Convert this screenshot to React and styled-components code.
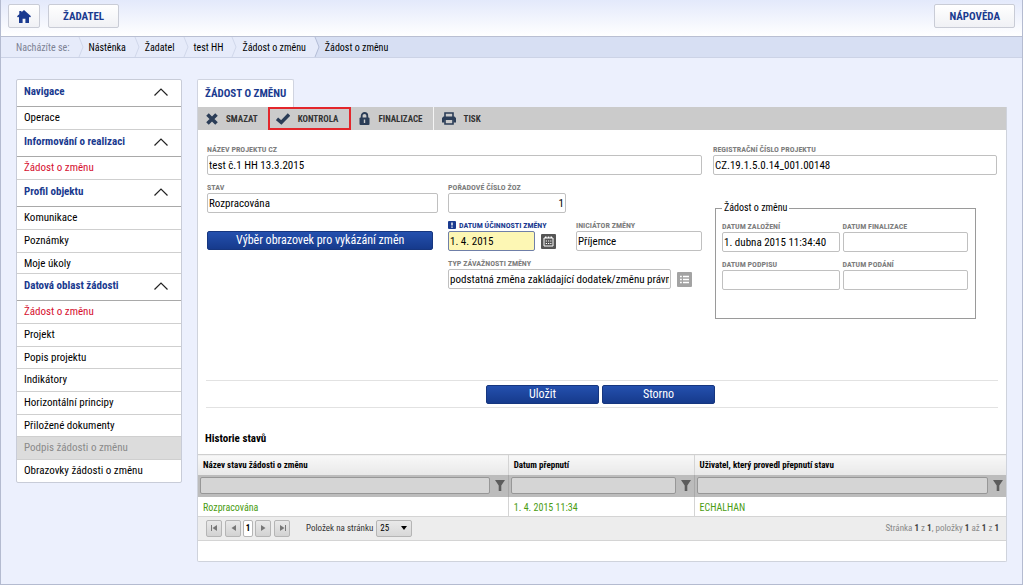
import { useState } from "react";
import styled, { createGlobalStyle, css } from "styled-components";

const theme = {
    colors: {
        page: "#ecf0fd",
        blue: "#1a3a8f",
        red: "#d6102f",
        green: "#4a9c12",
        label: "#7d7d7d",
        icon: "#2b3d57",
        line: "#cfcfcf",
    },
    fonts: {
        label: "8px",
        tiny: "9px",
        small: "10px",
        base: "11px",
        large: "12px",
    },
};

const menu = [
    { title: "Navigace", items: [{ label: "Operace" }] },
    { title: "Informování o realizaci", items: [{ label: "Žádost o změnu", active: true }] },
    {
        title: "Profil objektu",
        items: [{ label: "Komunikace" }, { label: "Poznámky" }, { label: "Moje úkoly" }],
    },
    {
        title: "Datová oblast žádosti",
        items: [
            { label: "Žádost o změnu", active: true },
            { label: "Projekt" },
            { label: "Popis projektu" },
            { label: "Indikátory" },
            { label: "Horizontální principy" },
            { label: "Přiložené dokumenty" },
            { label: "Podpis žádosti o změnu", disabled: true },
            { label: "Obrazovky žádosti o změnu" },
        ],
    },
];

const crumbs = ["Nástěnka", "Žadatel", "test HH", "Žádost o změnu"];
const columns = ["Název stavu žádosti o změnu", "Datum přepnutí", "Uživatel, který provedl přepnutí stavu"];
const rows = [["Rozpracována", "1. 4. 2015 11:34", "ECHALHAN"]];

export default function App() {
    return (
        <>
            <GlobalStyle />
            <PageStyled>
                <Header />
                <Breadcrumb />
                <BodyStyled>
                    <Sidebar />
                    <Main />
                </BodyStyled>
            </PageStyled>
        </>
    );
}

function Header() {
    return (
        <HeaderStyled>
            <HeaderButton $square aria-label="Domů">
                <svg width="14" height="13" viewBox="0 0 14 13" fill="currentColor">
                    <path d="M7 0 4.500 2.200V1H2.300v3.200L0 6.200l1 1.200 1-.7V13h3.600V8.800h2.800V13H12V6.700l1 .7 1-1.200z" />
                </svg>
            </HeaderButton>
            <HeaderButton>ŽADATEL</HeaderButton>
            <Spacer />
            <HeaderButton>NÁPOVĚDA</HeaderButton>
        </HeaderStyled>
    );
}

function CrumbArrow({ dark }) {
    return (
        <svg width="6" height="20" viewBox="0 0 6 20" fill="none">
            <path d="M0 0h1l4 10-4 10H0z" fill="#e6ebfa" />
            <path d="M1 0l4 10-4 10" stroke={dark ? "#b3bcd6" : "#d0d7ea"} />
        </svg>
    );
}

function Breadcrumb() {
    return (
        <BreadcrumbStyled aria-label="Nacházíte se">
            <CrumbLabel>Nacházíte se:</CrumbLabel>
            {crumbs.map((crumb) => (
                <Crumb key={crumb}>
                    <CrumbArrow />
                    <a href="#crumb">{crumb}</a>
                </Crumb>
            ))}
            <Crumb $current>
                <CrumbArrow dark />
                <a href="#crumb">Žádost o změnu</a>
            </Crumb>
        </BreadcrumbStyled>
    );
}

function Sidebar() {
    return (
        <SidebarStyled>
            {menu.map(({ title, items }) => (
                <section key={title}>
                    <MenuHeading>
                        {title}
                        <svg width="14" height="8" viewBox="0 0 14 8" fill="none" stroke="#222" strokeWidth="1.200">
                            <path d="M.5 7.500 7 1l6.500 6.500" />
                        </svg>
                    </MenuHeading>
                    <MenuList>
                        {items.map(({ label, active, disabled }) => (
                            <li key={label}>
                                <MenuLink href="#menu" $active={active} $disabled={disabled}>
                                    {label}
                                </MenuLink>
                            </li>
                        ))}
                    </MenuList>
                </section>
            ))}
        </SidebarStyled>
    );
}

function Main() {
    return (
        <MainStyled>
            <Tab>ŽÁDOST O ZMĚNU</Tab>
            <Panel>
                <Toolbar />
                <Form />
                <Actions>
                    <BlueButton $width="113px">Uložit</BlueButton>
                    <BlueButton $width="113px">Storno</BlueButton>
                </Actions>
                <Title>Historie stavů</Title>
                <History />
                <Pager />
            </Panel>
        </MainStyled>
    );
}

function Toolbar() {
    return (
        <ToolbarStyled>
            <ToolButton>
                <svg width="12" height="12" viewBox="0 0 12 12" stroke={theme.colors.icon} strokeWidth="3.600">
                    <path d="M1.500 1.500l9 9M10.500 1.500l-9 9" />
                </svg>
                SMAZAT
            </ToolButton>
            <ToolButton $marked>
                <svg width="14" height="12" viewBox="0 0 14 12" fill="none" stroke={theme.colors.icon} strokeWidth="3.400">
                    <path d="M1 5.800l4.300 3.700L13 1.500" />
                </svg>
                KONTROLA
            </ToolButton>
            <ToolButton>
                <svg width="11" height="13" viewBox="0 0 11 13">
                    <path d="M2.700 6V3.800a2.800 2.800 0 0 1 5.600 0V6" fill="none" stroke={theme.colors.icon} strokeWidth="1.800" />
                    <rect x=".5" y="5.500" width="10" height="7.500" rx="1" fill={theme.colors.icon} />
                    <path d="M5.500 7.500v3.500" stroke="#cbcbcb" strokeWidth="1.400" />
                </svg>
                FINALIZACE
            </ToolButton>
            <Divider />
            <ToolButton>
                <svg width="14" height="13" viewBox="0 0 14 13">
                    <path d="M3 5V1h8v4" fill="none" stroke={theme.colors.icon} strokeWidth="1.600" />
                    <path d="M1.500 4.500h11l1.500 1.500v4.500h-2.500V8h-9v2.500H0V6z" fill={theme.colors.icon} />
                    <path d="M3 8v4h8V8" fill="none" stroke={theme.colors.icon} strokeWidth="1.600" />
                </svg>
                TISK
            </ToolButton>
        </ToolbarStyled>
    );
}

function Field({ id, label, value = "", required, suffix, area, ...rest }) {
    const [text, setText] = useState(value);
    return (
        <FieldStyled $area={area}>
            <FieldLabel htmlFor={id} $required={required}>
                {required && <RequiredMark />}
                {label}
            </FieldLabel>
            <FieldLine>
                <Input id={id} value={text} onChange={(e) => setText(e.target.value)} {...rest} />
                {suffix}
            </FieldLine>
        </FieldStyled>
    );
}

function RequiredMark() {
    return (
        <svg width="8" height="8" viewBox="0 0 8 8">
            <rect width="8" height="8" rx="1" fill={theme.colors.blue} />
            <path d="M4 1.500v3M4 5.500v1.200" stroke="#fff" strokeWidth="1.400" />
        </svg>
    );
}

function Form() {
    return (
        <FormStyled onSubmit={(e) => e.preventDefault()}>
            <LeftFields>
                <Field id="nazev" label="NÁZEV PROJEKTU CZ" value="test č.1 HH 13.3.2015" area="nazev" />
                <Field id="stav" label="STAV" value="Rozpracována" area="stav" />
                <Field id="poradi" label="POŘADOVÉ ČÍSLO ŽOZ" value="1" area="poradi" $right />
                <ButtonCell>
                    <BlueButton type="button" $width="98%">Výběr obrazovek pro vykázání změn</BlueButton>
                </ButtonCell>
                <Field
                    id="datum"
                    label="DATUM ÚČINNOSTI ZMĚNY"
                    value="1. 4. 2015"
                    area="datum"
                    required
                    $yellow
                    suffix={
                        <IconButton type="button" aria-label="Kalendář" $color="#555">
                            <svg width="15" height="15" viewBox="0 0 15 15">
                                <path d="M3 4h9v8H3z" fill="none" stroke="#fff" />
                                <path d="M4 2.500h1.500V4H4zM6.800 2.500h1.500V4H6.800zM9.500 2.500H11V4H9.500z" fill="#fff" />
                                <path d="M4.800 7h6M4.800 9.500h6" stroke="#fff" strokeWidth="1.200" strokeDasharray="1.200 1" />
                            </svg>
                        </IconButton>
                    }
                />
                <Field id="iniciator" label="INICIÁTOR ZMĚNY" value="Příjemce" area="iniciator" />
                <Field
                    id="typ"
                    label="TYP ZÁVAŽNOSTI ZMĚNY"
                    value="podstatná změna zakládající dodatek/změnu právní"
                    area="typ"
                    suffix={
                        <IconButton type="button" aria-label="Seznam" $color="#a3a3a3">
                            <svg width="15" height="15" viewBox="0 0 15 15" stroke="#fff" strokeWidth="1.500">
                                <path d="M3 4.500h1.800M6 4.500h6M3 7.500h1.800M6 7.500h6M3 10.500h1.800M6 10.500h6" />
                            </svg>
                        </IconButton>
                    }
                />
            </LeftFields>
            <RightFields>
                <Field id="cislo" label="REGISTRAČNÍ ČÍSLO PROJEKTU" value="CZ.19.1.5.0.14_001.00148" />
                <Group>
                    <legend>Žádost o změnu</legend>
                    <GroupGrid>
                        <Field id="zalozeni" label="DATUM ZALOŽENÍ" value="1. dubna 2015 11:34:40" />
                        <Field id="finalizace" label="DATUM FINALIZACE" />
                        <Field id="podpis" label="DATUM PODPISU" />
                        <Field id="podani" label="DATUM PODÁNÍ" />
                    </GroupGrid>
                </Group>
            </RightFields>
        </FormStyled>
    );
}

function History() {
    return (
        <Table>
            <colgroup>
                <Col $width="38.4%" />
                <Col $width="23%" />
                <Col $width="38.6%" />
            </colgroup>
            <thead>
                <tr>
                    {columns.map((column) => (
                        <th key={column}>{column}</th>
                    ))}
                </tr>
                <tr className="filters">
                    {columns.map((column) => (
                        <td key={column}>
                            <FilterCell>
                                <FilterInput aria-label={column} />
                                <svg width="10" height="11" viewBox="0 0 10 11" fill="#5c5c5c">
                                    <path d="M0 0h10L6.300 5.500V11H3.700V5.500z" />
                                </svg>
                            </FilterCell>
                        </td>
                    ))}
                </tr>
            </thead>
            <tbody>
                {rows.map((row) => (
                    <tr key={row[0]}>
                        {row.map((cell) => (
                            <td key={cell}>{cell}</td>
                        ))}
                    </tr>
                ))}
            </tbody>
        </Table>
    );
}

function PageIcon({ last, bar }) {
    return (
        <svg width="7" height="6" viewBox="0 0 7 6" fill="#777">
            <path d={last ? "M1 0l4.500 3L1 6z" : "M6 0L1.500 3 6 6z"} />
            {bar && <path d={last ? "M6 0h1v6H6z" : "M0 0h1v6H0z"} />}
        </svg>
    );
}

function Pager() {
    return (
        <PagerStyled>
            <PageButton aria-label="První"><PageIcon bar /></PageButton>
            <PageGroup>
                <PageButton aria-label="Předchozí"><PageIcon /></PageButton>
                <PageButton $current>1</PageButton>
                <PageButton aria-label="Další"><PageIcon last /></PageButton>
            </PageGroup>
            <PageButton aria-label="Poslední"><PageIcon last bar /></PageButton>
            <PageSize>
                <label htmlFor="size">Položek na stránku</label>
                <SelectBox>
                    <select id="size" defaultValue="25">
                        <option>10</option>
                        <option>25</option>
                        <option>50</option>
                    </select>
                    <svg width="6" height="4" viewBox="0 0 6 4">
                        <path d="M0 0h6L3 4z" />
                    </svg>
                </SelectBox>
            </PageSize>
            <Spacer />
            <PageInfo>
                Stránka <b>1</b> z <b>1</b>, položky <b>1</b> až <b>1</b> z <b>1</b>
            </PageInfo>
        </PagerStyled>
    );
}

const GlobalStyle = createGlobalStyle`
    * {
        box-sizing: border-box;
    }

    body {
        margin: 0;
        background: ${theme.colors.page};
    }

    body, button, input, select {
        font-family: "Roboto Condensed", "Liberation Sans Narrow", Roboto, sans-serif;
        font-size: ${theme.fonts.base};
        color: #000;
    }

    a {
        color: inherit;
        text-decoration: none;
    }

    svg {
        flex: none;
    }
`;

const PageStyled = styled.div`
    min-height: 100vh;
    border: 1px solid #b4bbd0;
    border-top: 0;
    background: ${theme.colors.page};
`;

const HeaderStyled = styled.header`
    display: flex;
    gap: 8px;
    height: 36px;
    padding: 4px 7px;
    background: linear-gradient(#e3e9fb, #fff);
`;

const HeaderButton = styled.button`
    display: flex;
    align-items: center;
    justify-content: center;
    height: 24px;
    padding: 0 ${({ $square }) => ($square ? "8px" : "14px")};
    border: 1px solid #c9ccd6;
    border-radius: 2px;
    background: linear-gradient(#fff, #f0f1f5);
    color: ${theme.colors.blue};
    font-weight: bold;
`;

const Spacer = styled.div`
    flex: 1;
`;

const BreadcrumbStyled = styled.nav`
    display: flex;
    align-items: center;
    height: 22px;
    border-top: 1px solid #b9bfd2;
    border-bottom: 1px solid #ccd3e6;
    background: #e6ebfa;
    font-size: ${theme.fonts.small};
`;

const CrumbLabel = styled.span`
    padding: 0 8px 0 15px;
    color: #7c8294;
`;

const Crumb = styled.span`
    display: flex;
    align-items: center;
    gap: 5px;
    padding-right: 8px;

    ${({ $current }) => $current && css`
        flex: 1;
        background: #d7dff3;
    `}
`;

const BodyStyled = styled.div`
    display: flex;
    align-items: flex-start;
    gap: 15px;
    padding: 21px 15px;
`;

const SidebarStyled = styled.aside`
    flex: none;
    width: 166px;
    border: 1px solid #c8ccd8;
    border-radius: 2px;
    background: #fff;
`;

const MenuHeading = styled.h2`
    display: flex;
    align-items: center;
    justify-content: space-between;
    height: 27px;
    margin: 0;
    padding: 0 13px 3px 7px;
    border-bottom: 1px solid #a9a9a9;
    color: ${theme.colors.blue};
    font-size: ${theme.fonts.base};
    font-weight: bold;
`;

const MenuList = styled.ul`
    margin: 0;
    padding: 0;
    list-style: none;

    section:not(:last-child) & li:last-child {
        border-bottom: 1px solid ${theme.colors.line};
    }

    li + li {
        border-top: 1px solid ${theme.colors.line};
    }

    li:nth-child(3n) {
        height: 22px;
    }
`;

const MenuLink = styled.a`
    display: block;
    padding: 0 7px;
    line-height: 22px;
    color: ${({ $active, $disabled }) => ($active ? theme.colors.red : $disabled ? "#8a8a8a" : "inherit")};
    background: ${({ $disabled }) => ($disabled ? "#dcdcdc" : "none")};
`;

const MainStyled = styled.main`
    flex: 1;
    min-width: 0;
`;

const Tab = styled.h1`
    width: fit-content;
    height: 28px;
    margin: 0;
    padding: 0 7px;
    border: 1px solid #d0d4e0;
    border-bottom: 0;
    border-radius: 2px 2px 0 0;
    background: #fff;
    color: ${theme.colors.blue};
    font-size: ${theme.fonts.base};
    line-height: 27px;
`;

const Panel = styled.div`
    padding-bottom: 20px;
    border: 1px solid #cfd3dc;
    border-top: 0;
    border-radius: 0 0 2px 2px;
    background: #fff;
`;

const ToolbarStyled = styled.div`
    display: flex;
    height: 23px;
    background: #cbcbcb;
`;

const ToolButton = styled.button`
    display: flex;
    align-items: center;
    gap: 8px;
    padding: 0 10px 0 8px;
    border: 0;
    background: none;
    color: #333;
    font-size: ${theme.fonts.tiny};
    font-weight: bold;

    ${({ $marked }) => $marked && css`
        padding: 0 11px 0 6px;
        border: 2px solid #e3262b;
    `}
`;

const Divider = styled.span`
    width: 1px;
    background: #f4f4f4;
`;

const FormStyled = styled.form`
    display: grid;
    grid-template-columns: 495fr 284fr;
    gap: 11px;
    min-height: 250px;
    padding: 13px 9px 0;
    align-items: start;
`;

const LeftFields = styled.div`
    display: grid;
    grid-template-columns: 231fr 118fr 126fr;
    grid-template-areas:
        "nazev nazev nazev"
        "stav poradi ."
        "button datum iniciator"
        ". typ typ";
    gap: 6px 10px;
`;

const RightFields = styled.div`
    display: flex;
    flex-direction: column;
`;

const FieldStyled = styled.div`
    grid-area: ${({ $area }) => $area || "auto"};
    min-width: 0;
`;

const FieldLabel = styled.label`
    display: flex;
    align-items: center;
    gap: 3px;
    height: 12px;
    color: ${({ $required }) => ($required ? theme.colors.blue : theme.colors.label)};
    font-size: ${theme.fonts.label};
    font-weight: bold;
    white-space: nowrap;
`;

const FieldLine = styled.div`
    display: flex;
    align-items: center;
    gap: 6px;
`;

const Input = styled.input`
    flex: 1;
    min-width: 0;
    width: 100%;
    height: 20px;
    padding: 0 1px;
    border: 1px solid #c0c0c0;
    border-radius: 2px;
    background: ${({ $yellow }) => ($yellow ? "#fdf7b4" : "#fff")};
    border-color: ${({ $yellow }) => ($yellow ? "#6f7fa8" : "#c0c0c0")};
    text-align: ${({ $right }) => ($right ? "right" : "left")};
`;

const IconButton = styled.button`
    display: flex;
    width: 15px;
    height: 15px;
    margin-right: 10px;
    padding: 0;
    border: 0;
    border-radius: 1px;
    background: ${({ $color }) => $color};
`;

const ButtonCell = styled.div`
    grid-area: button;
    display: flex;
    align-items: flex-end;
    padding-bottom: 1px;
`;

const BlueButton = styled.button`
    width: ${({ $width }) => $width};
    height: 19px;
    padding: 0;
    border: 1px solid #16367f;
    border-radius: 2px;
    background: linear-gradient(#2450ae, #163a8c);
    color: #fff;
    font-size: ${theme.fonts.large};
    line-height: 17px;
`;

const Group = styled.fieldset`
    min-width: 0;
    height: 117px;
    margin: 27px 21px 0 2px;
    padding: 0 7px 0 6px;
    border: 1px solid #9a9a9a;

    legend {
        padding: 0 2px;
        font-size: ${theme.fonts.small};
        line-height: 12px;
    }
`;

const GroupGrid = styled.div`
    display: grid;
    grid-template-columns: 118fr 126fr;
    gap: 6px 3px;
    padding-top: 6px;
`;

const Actions = styled.div`
    display: flex;
    justify-content: center;
    gap: 3px;
    margin: 0 8px;
    padding: 4px 3px 3px 0;
    border-top: 1px solid #e2e2e2;
    border-bottom: 1px solid #e2e2e2;
`;

const Title = styled.h2`
    margin: 24px 7px 8px;
    font-size: ${theme.fonts.base};
    line-height: 14px;
`;

const Table = styled.table`
    width: 100%;
    table-layout: fixed;
    border-collapse: collapse;
    text-align: left;

    th, td {
        padding: 0 5px;
        border-left: 1px solid #d4d4d4;
    }

    th:first-child, td:first-child {
        border-left: 0;
    }

    th {
        height: 20px;
        border-top: 1px solid ${theme.colors.line};
        background: linear-gradient(#f8f8f8, #e8e8e8);
        font-size: ${theme.fonts.tiny};
    }

    .filters td {
        height: 22px;
        padding: 0 3px 0 2px;
        border-color: #a9a9a9;
        background: #bcbcbc;
    }

    tbody td {
        height: 19px;
        padding-top: 2px;
        color: ${theme.colors.green};
        font-size: ${theme.fonts.small};
    }
`;

const Col = styled.col`
    width: ${({ $width }) => $width};
`;

const FilterCell = styled.div`
    display: flex;
    align-items: center;
    gap: 5px;
`;

const FilterInput = styled.input`
    flex: 1;
    min-width: 0;
    height: 17px;
    border: 1px solid #979797;
    border-radius: 2px;
    background: #d5d5d5;
`;

const PagerStyled = styled.div`
    display: flex;
    align-items: center;
    gap: 3px;
    height: 25px;
    padding: 0 7px 0 8px;
    border-top: 1px solid #d4d4d4;
    border-bottom: 1px solid #d4d4d4;
    background: #ededed;
    font-size: ${theme.fonts.tiny};
`;

const PageGroup = styled.div`
    display: flex;
    gap: 2px;
`;

const PageButton = styled.button`
    display: flex;
    align-items: center;
    justify-content: center;
    width: ${({ $current }) => ($current ? "10px" : "16px")};
    height: 17px;
    padding: 0;
    border: 1px solid #b5b5b5;
    border-radius: 2px;
    background: ${({ $current }) => ($current ? "#fff" : "linear-gradient(#e9e9e9, #d2d2d2)")};
    font-size: ${theme.fonts.tiny};
    font-weight: bold;
`;

const PageSize = styled.div`
    display: flex;
    align-items: center;
    gap: 3px;
    margin-left: 13px;
    color: #333;
`;

const SelectBox = styled.span`
    display: flex;
    align-items: center;

    select {
        appearance: none;
        width: 36px;
        height: 17px;
        padding: 0 3px;
        border: 1px solid #b5b5b5;
        border-radius: 2px;
        background: linear-gradient(#e9e9e9, #d8d8d8);
        font-size: ${theme.fonts.tiny};
    }

    svg {
        margin-left: -11px;
        pointer-events: none;
    }
`;

const PageInfo = styled.span`
    color: #888;
    font-size: ${theme.fonts.tiny};

    b {
        color: #444;
    }
`;
